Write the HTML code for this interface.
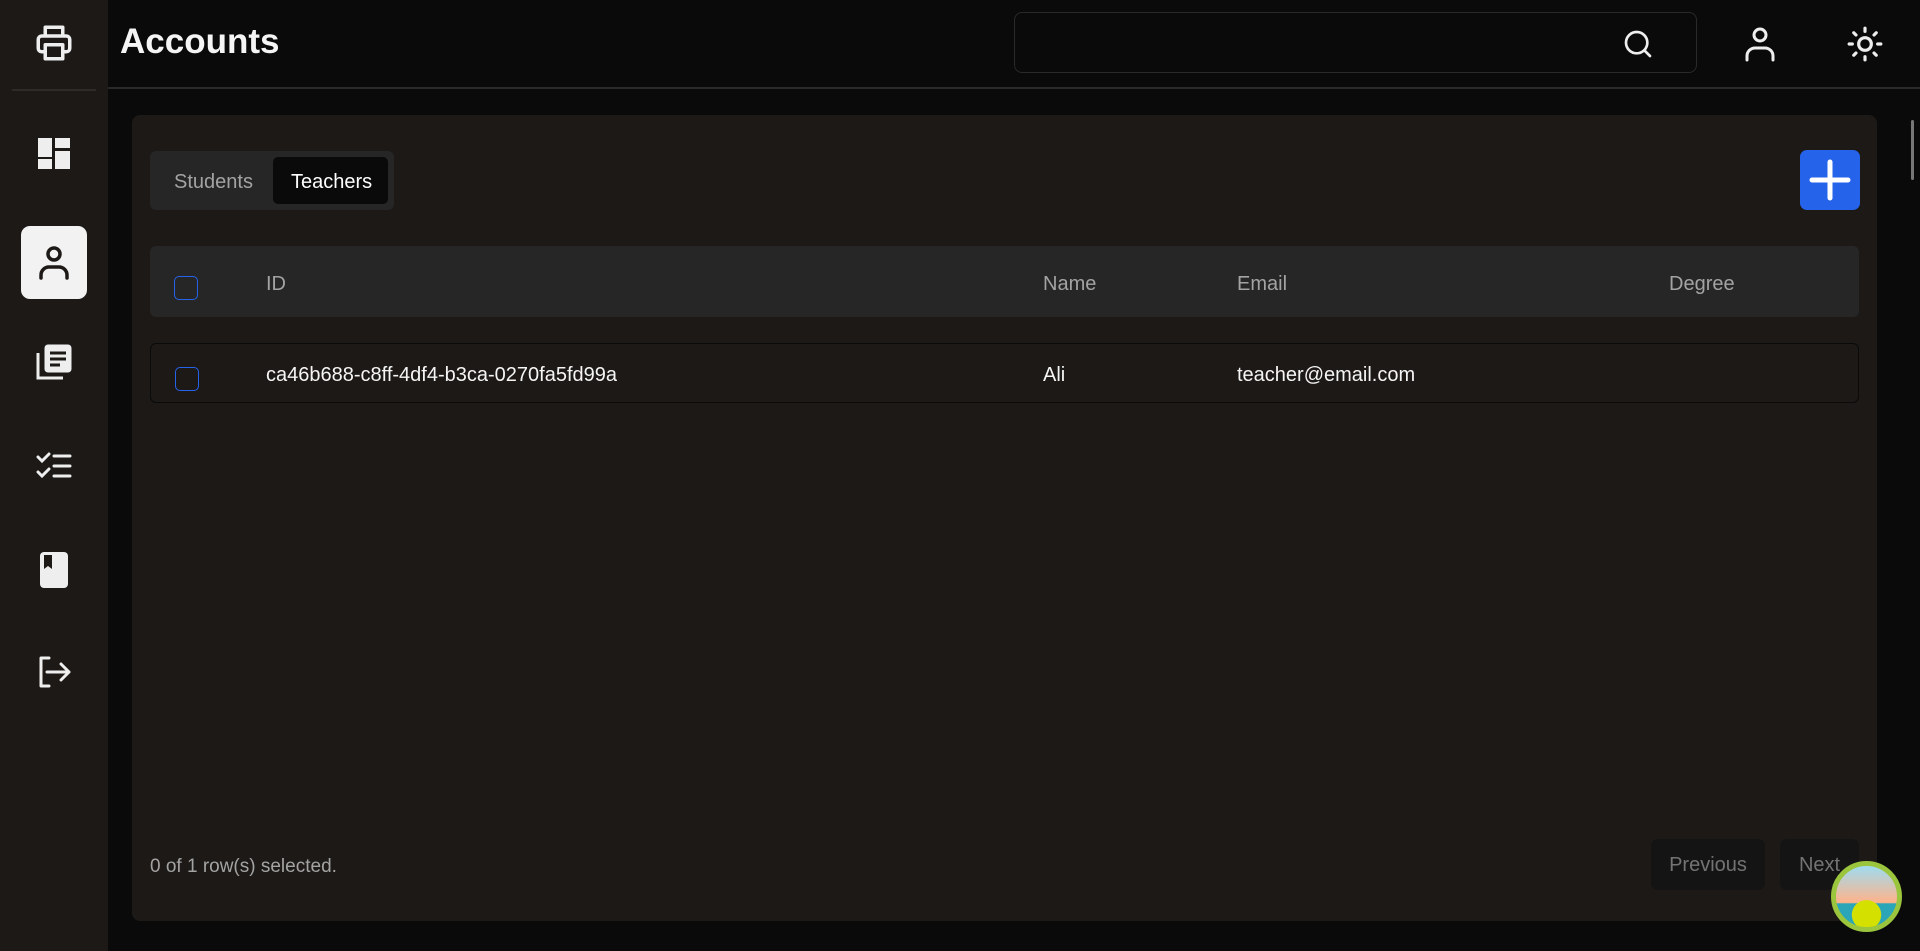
<!DOCTYPE html>
<html><head><meta charset="utf-8"><style>
*{box-sizing:border-box;margin:0;padding:0}
body{width:1920px;height:951px;background:#0a0a0a;font-family:"Liberation Sans",sans-serif;color:#f5f5f5;position:relative;overflow:hidden}
.side{position:absolute;left:0;top:0;width:108px;height:951px;background:#1c1917}
.ic{position:absolute;left:54px;transform:translate(-50%,-50%)}
.div{position:absolute;left:12px;top:89px;width:84px;height:2px;background:#2e2b29}
.active{position:absolute;left:21px;top:226px;width:66px;height:73px;background:#f2f2f2;border-radius:9px}
.hdr{position:absolute;left:108px;top:0;right:0;height:89px;border-bottom:2px solid #2a2a2a}
h1{position:absolute;left:120px;top:22px;font-size:35px;font-weight:bold}
.search{position:absolute;left:1014px;top:12px;width:683px;height:61px;border:1px solid #2a2a2a;border-radius:8px}
.card{position:absolute;left:132px;top:115px;width:1745px;height:806px;background:#1c1917;border-radius:8px}
.tabs{position:absolute;left:150px;top:151px;width:244px;height:59px;background:#262626;border-radius:6px}
.tab{position:absolute;font-size:20px;top:20px}
.tsel{position:absolute;left:123px;top:6px;width:115px;height:47px;background:#0a0a0a;border-radius:5px}
.plus{position:absolute;left:1800px;top:150px;width:60px;height:60px;background:#2563eb;border-radius:7px}
.th{position:absolute;left:150px;top:246px;width:1709px;height:71px;background:#262626;border-radius:6px;color:#a3a3a3;font-size:20px}
.tr{position:absolute;left:150px;top:343px;width:1709px;height:60px;border:1px solid #0a0a0a;border-radius:6px;font-size:20px}
.cb{position:absolute;left:24px;width:24px;height:24px;border:1.5px solid #2563eb;border-radius:5px}
.c{position:absolute}
.foot{position:absolute;left:150px;top:856px;font-size:19px;color:#a3a3a3}
.btn{position:absolute;top:839px;height:51px;background:#141414;border-radius:7px;color:#737373;font-size:20px;text-align:center;line-height:53px}
</style></head><body>
<div class="side">
<svg class="ic" style="top:43px" width="42" height="42" viewBox="0 0 24 24" fill="none" stroke="#eee" stroke-width="2" stroke-linejoin="round"><path d="M7 8V3h10v5M7 17H5a2 2 0 0 1-2-2v-5a2 2 0 0 1 2-2h14a2 2 0 0 1 2 2v5a2 2 0 0 1-2 2h-2"/><rect x="7" y="13" width="10" height="8"/></svg>
<div class="div"></div>
<svg class="ic" style="top:154px" width="34" height="34" viewBox="0 0 34 34" fill="#eee"><rect x="1" y="1" width="14" height="19"/><rect x="18" y="1" width="15" height="10"/><rect x="1" y="22" width="14" height="10"/><rect x="18" y="14" width="15" height="18"/></svg>
<div class="active"></div>
<svg class="ic" style="top:262px" width="32" height="36" viewBox="0 0 32 36" fill="none" stroke="#1c1917" stroke-width="3.5" stroke-linecap="round"><circle cx="16" cy="10" r="6"/><path d="M3 34v-3a8 8 0 0 1 8-8h10a8 8 0 0 1 8 8v3"/></svg>
<svg class="ic" style="top:362px" width="38" height="38" viewBox="0 0 38 38" fill="none" stroke="#eee" stroke-width="3"><path d="M3 10v25h25"/><rect x="11" y="3" width="24" height="25" rx="2" fill="#eee"/><path d="M15 10h16M15 16h16M15 22h10" stroke="#1c1917" stroke-width="3"/></svg>
<svg class="ic" style="top:466px" width="36" height="30" viewBox="0 0 36 30" fill="none" stroke="#eee" stroke-width="3" stroke-linecap="round"><path d="M2 6l4 4 7-7M2 21l4 4 7-7M18 5h16M18 15h16M18 25h16"/></svg>
<svg class="ic" style="top:570px" width="30" height="36" viewBox="0 0 30 36"><rect x="1" y="0" width="28" height="36" rx="4" fill="#eee"/><path d="M5 3h8v14l-4-3-4 3z" fill="#1c1917"/></svg>
<svg class="ic" style="top:672px" width="34" height="32" viewBox="0 0 34 32" fill="none" stroke="#eee" stroke-width="3" stroke-linecap="round" stroke-linejoin="round"><path d="M12 2H4v28h8M10 16h22M24 8l8 8-8 8"/></svg>
</div>
<div class="hdr"></div>
<h1>Accounts</h1>
<div class="search"><svg style="position:absolute;left:607px;top:15px" width="32" height="32" viewBox="0 0 24 24" fill="none" stroke="#eee" stroke-width="2" stroke-linecap="round"><circle cx="11" cy="11" r="8"/><path d="M17 17l4 4"/></svg></div>
<svg style="position:absolute;left:1744px;top:26px" width="32" height="36" viewBox="0 0 32 36" fill="none" stroke="#eee" stroke-width="3" stroke-linecap="round"><circle cx="16" cy="9" r="6"/><path d="M3 34v-4a8 8 0 0 1 8-8h10a8 8 0 0 1 8 8v4"/></svg>
<svg style="position:absolute;left:1846px;top:25px" width="38" height="38" viewBox="0 0 24 24" fill="none" stroke="#eee" stroke-width="2" stroke-linecap="round"><circle cx="12" cy="12" r="4"/><path d="M12 2v2M12 20v2M4.9 4.9l1.4 1.4M17.7 17.7l1.4 1.4M2 12h2M20 12h2M4.9 19.1l1.4-1.4M17.7 6.3l1.4-1.4"/></svg>
<div class="card"></div>
<div class="tabs"><div class="tsel"></div><span class="tab" style="left:24px;color:#a3a3a3">Students</span><span class="tab" style="left:141px;color:#fff">Teachers</span></div>
<div class="plus"><svg width="60" height="60" viewBox="0 0 60 60" stroke="#fff" stroke-width="5" stroke-linecap="round"><path d="M30 12v36M12 30h36"/></svg></div>
<div class="th"><div class="cb" style="top:30px"></div><span class="c" style="left:116px;top:27px">ID</span><span class="c" style="left:893px;top:27px">Name</span><span class="c" style="left:1087px;top:27px">Email</span><span class="c" style="left:1519px;top:27px">Degree</span></div>
<div class="tr"><div class="cb" style="top:23px"></div><span class="c" style="left:115px;top:20px">ca46b688-c8ff-4df4-b3ca-0270fa5fd99a</span><span class="c" style="left:892px;top:20px">Ali</span><span class="c" style="left:1086px;top:20px">teacher@email.com</span></div>
<div class="foot">0 of 1 row(s) selected.</div>
<div class="btn" style="left:1651px;width:114px">Previous</div>
<div class="btn" style="left:1780px;width:79px">Next</div>
<div style="position:absolute;left:1911px;top:120px;width:3px;height:60px;background:#777;border-radius:2px"></div>
<div style="position:absolute;left:1831px;top:861px;width:71px;height:71px;border-radius:50%;background:radial-gradient(circle at 50% 80%,#d4e000 0 25%,transparent 26%),linear-gradient(#9fdcf0,#ffb38a 60%,#2aa6b8 62%);border:5px solid #9bc53d"></div>
</body></html>
